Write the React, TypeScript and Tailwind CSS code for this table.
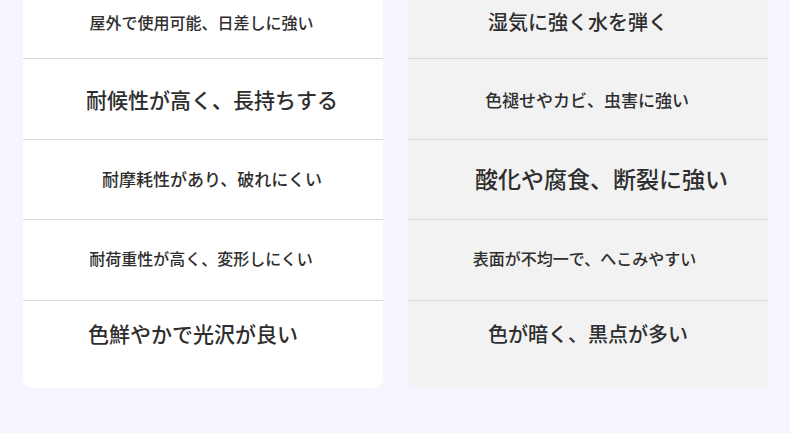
const left = [
  { text: "屋外で使用可能、日差しに強い", cls: "text-[16px] ml-[-3px] pt-[7px]" },
  { text: "耐候性が高く、長持ちする", cls: "text-[21px] ml-[18px]" },
  { text: "耐摩耗性があり、破れにくい", cls: "text-[17px] ml-[18px] mt-[-2px]" },
  { text: "耐荷重性が高く、変形しにくい", cls: "text-[16px] ml-[-4px] mt-[-4px]" },
  { text: "色鮮やかで光沢が良い", cls: "text-[21px] ml-[-20px]" },
];

const right = [
  { text: "湿気に強く水を弾く", cls: "text-[20px] ml-[-20px] pt-[7px]" },
  { text: "色褪せやカビ、虫害に強い", cls: "text-[17px] ml-[-2px]" },
  { text: "酸化や腐食、断裂に強い", cls: "text-[23px] ml-[27px] mt-[-2px]" },
  { text: "表面が不均一で、へこみやすい", cls: "text-[16px] ml-[-7px] mt-[-4px]" },
  { text: "色が暗く、黒点が多い", cls: "text-[20px]" },
];

// heights so the dividers land on 58 / 139 / 219 / 300
const heights = ["h-[81px]", "h-[81px]", "h-[80px]", "h-[81px]"];

function Card({ rows, bg }: { rows: { text: string; cls: string }[]; bg: string }) {
  return (
    <div className={`w-[360px] mt-[-22px] rounded-[10px] overflow-hidden ${bg}`}>
      {rows.map((r, i) => (
        <div
          key={i}
          className={
            i === rows.length - 1
              ? "h-[87px] pb-[22px] flex items-center justify-center"
              : `${heights[i]} border-b border-[#d9d9d9] flex items-center justify-center`
          }
        >
          <span className={`leading-none font-medium text-[#2e2e2e] ${r.cls}`}>{r.text}</span>
        </div>
      ))}
    </div>
  );
}

export default function App() {
  return (
    <div
      className="w-[790px] h-[433px] overflow-hidden bg-[#f8f4fd] flex items-start gap-[25px] pl-[23px]"
      style={{ fontFamily: '"Noto Sans CJK JP", "Noto Sans", sans-serif' }}
    >
      <Card rows={left} bg="bg-white" />
      <Card rows={right} bg="bg-[#f2f2f2]" />
    </div>
  );
}
